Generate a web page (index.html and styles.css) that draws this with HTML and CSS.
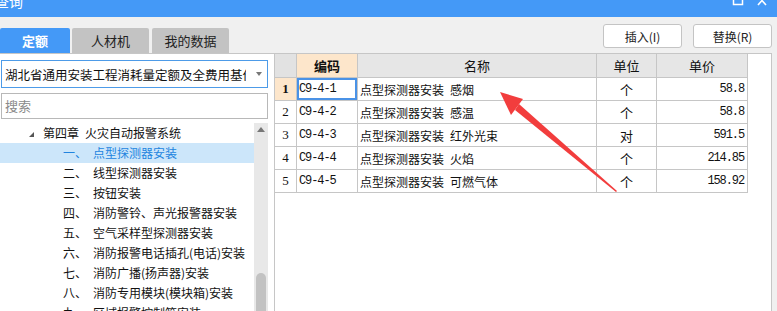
FILE: index.html
```html
<!DOCTYPE html>
<html lang="zh">
<head>
    <meta charset="UTF-8">
    <title>查询</title>
    <link rel="stylesheet" href="styles.css">
</head>
<body>
    <div class="titlebar">
        <span class="title">查询</span>
        <svg class="win-btns" width="40" height="17" viewBox="0 0 40 17">
            <rect x="1.5" y="-6" width="9" height="10.5" fill="none" stroke="#fff" stroke-width="1.5"/>
            <path d="M26 -4 L34 5 M34 -4 L26 5" stroke="#fff" stroke-width="1.6"/>
        </svg>
    </div>

    <div class="main">
        <div class="left">
            <div class="tabs">
                <div class="tab active">定额</div>
                <div class="tab">人材机</div>
                <div class="tab">我的数据</div>
            </div>
            <div class="left-body">
                <div class="select">
                    <span class="select-text">湖北省通用安装工程消耗量定额及全费用基价表</span>
                    <span class="caret"></span>
                </div>
                <div class="search">搜索</div>
                <div class="tree-wrap">
                    <ul class="tree">
                        <li class="chapter"><span class="tri"></span>第四章&ensp;火灾自动报警系统</li>
                        <li class="item selected"><span class="num">一、</span>点型探测器安装</li>
                        <li class="item"><span class="num">二、</span>线型探测器安装</li>
                        <li class="item"><span class="num">三、</span>按钮安装</li>
                        <li class="item"><span class="num">四、</span>消防警铃、声光报警器安装</li>
                        <li class="item"><span class="num">五、</span>空气采样型探测器安装</li>
                        <li class="item"><span class="num">六、</span>消防报警电话插孔(电话)安装</li>
                        <li class="item"><span class="num">七、</span>消防广播(扬声器)安装</li>
                        <li class="item"><span class="num">八、</span>消防专用模块(模块箱)安装</li>
                        <li class="item"><span class="num">九、</span>区域报警控制箱安装</li>
                    </ul>
                    <div class="scrollbar">
                        <span class="up"></span>
                        <span class="thumb"></span>
                    </div>
                </div>
            </div>
        </div>

        <div class="right">
            <div class="toolbar">
                <button>插入(I)</button>
                <button>替换(R)</button>
            </div>
            <div class="panel">
                <div class="grid">
                    <div class="th rn"></div>
                    <div class="th code-h">编码</div>
                    <div class="th">名称</div>
                    <div class="th">单位</div>
                    <div class="th">单价</div>

                    <div class="td rn current">1</div>
                    <div class="td code active">C9-4-1</div>
                    <div class="td name">点型探测器安装&ensp;感烟</div>
                    <div class="td unit">个</div>
                    <div class="td price">58.8</div>

                    <div class="td rn">2</div>
                    <div class="td code">C9-4-2</div>
                    <div class="td name">点型探测器安装&ensp;感温</div>
                    <div class="td unit">个</div>
                    <div class="td price">58.8</div>

                    <div class="td rn">3</div>
                    <div class="td code">C9-4-3</div>
                    <div class="td name">点型探测器安装&ensp;红外光束</div>
                    <div class="td unit">对</div>
                    <div class="td price">591.5</div>

                    <div class="td rn">4</div>
                    <div class="td code">C9-4-4</div>
                    <div class="td name">点型探测器安装&ensp;火焰</div>
                    <div class="td unit">个</div>
                    <div class="td price">214.85</div>

                    <div class="td rn">5</div>
                    <div class="td code">C9-4-5</div>
                    <div class="td name">点型探测器安装&ensp;可燃气体</div>
                    <div class="td unit">个</div>
                    <div class="td price">158.92</div>
                </div>
            </div>
        </div>
    </div>

    <!-- red annotation arrow -->
    <svg class="arrow" width="777" height="311" viewBox="0 0 777 311">
        <polygon points="500,92 523,99 511,115" fill="#f23d3d"/>
        <polygon points="515,110 519,104 617,191 616,192" fill="#f23d3d"/>
    </svg>
</body>
</html>
```

FILE: styles.css
```css
:root {
    --blue: #4499f7;
    --line: #c6c6c6;
    --bg: #f0f0f0;
    --peach: #fde6cb;
}

html, body {
    margin: 0;
    height: 311px;
    overflow: hidden;
}

body {
    background: var(--bg);
    font-family: "Noto Sans CJK SC", sans-serif;
    font-size: 12px;
    color: #111;
    position: relative;
}

.titlebar {
    height: 17px;
    background: var(--blue);
    display: flex;
    justify-content: space-between;
    overflow: hidden;
    color: #fff;
}

.title {
    font-size: 14px;
    line-height: 17px;
    margin-top: -7px;
    margin-left: -5px;
}

.win-btns {
    margin-right: 5px;
}

.main {
    display: flex;
    height: 294px;
}

/* left side */
.left {
    width: 274px;
    display: flex;
    flex-direction: column;
}

.tabs {
    height: 37px;
    box-sizing: border-box;
    padding-top: 11px;
    border-bottom: 1px solid var(--line);
    display: flex;
    gap: 2px;
}

.tab {
    width: 77px;
    background: #c3c3c3;
    border-radius: 2px 2px 0 0;
    text-align: center;
    line-height: 25px;
    font-size: 13px;
    color: #222;
}

.tab.active {
    width: 70px;
    background: var(--blue);
    color: #fff;
    font-weight: bold;
}

.tab + .tab + .tab {
    margin-left: 1px;
}

.left-body {
    flex: 1;
    background: #fff;
    padding-top: 6px;
    overflow: hidden;
}

.select {
    margin-left: 1px;
    width: 267px;
    height: 28px;
    box-sizing: border-box;
    border: 1px solid #4d9be8;
    display: flex;
    align-items: center;
    padding-left: 3px;
    font-size: 12.5px;
}

.select-text {
    flex: 1;
    white-space: nowrap;
    overflow: hidden;
}

.caret {
    width: 0;
    height: 0;
    border-left: 3px solid transparent;
    border-right: 3px solid transparent;
    border-top: 4px solid #777;
    margin: 0 5px 0 10px;
}

.search {
    margin: 5px 0 0 1px;
    width: 267px;
    height: 26px;
    box-sizing: border-box;
    border: 1px solid #b8b8b8;
    padding-left: 3px;
    line-height: 24px;
    font-size: 13px;
    color: #8a8a8a;
}

.tree-wrap {
    margin-top: 4px;
    display: flex;
    height: 200px;
}

.tree {
    list-style: none;
    margin: 0;
    padding: 0;
    width: 254px;
}

.tree li {
    height: 20px;
    line-height: 20px;
    white-space: nowrap;
}

.chapter {
    padding-left: 29px;
}

.tri {
    display: inline-block;
    width: 0;
    height: 0;
    border-left: 5px solid transparent;
    border-bottom: 5px solid #555;
    margin-right: 9px;
    vertical-align: middle;
}

.item {
    padding-left: 63px;
}

.num {
    display: inline-block;
    width: 30px;
}

.item.selected {
    background: #cce6fa;
    color: #2184df;
}

.scrollbar {
    width: 14px;
    background: #e8e8e8;
    display: flex;
    flex-direction: column;
    align-items: center;
}

.up {
    margin-top: 4px;
    width: 0;
    height: 0;
    border-left: 4px solid transparent;
    border-right: 4px solid transparent;
    border-bottom: 5px solid #777;
}

.thumb {
    margin-top: 141px;
    width: 10px;
    height: 60px;
    background: #c2c2c2;
    border-radius: 5px 5px 0 0;
}

/* right side */
.right {
    flex: 1;
    display: flex;
    flex-direction: column;
}

.toolbar {
    height: 36px;
    box-sizing: border-box;
    padding: 7px 5px 0 0;
    display: flex;
    justify-content: flex-end;
    gap: 11px;
}

button {
    width: 79px;
    height: 24px;
    background: #fff;
    border: 1px solid #c4c4c4;
    border-radius: 3px;
    font-family: "Noto Sans CJK SC", sans-serif;
    font-size: 12px;
    color: #222;
    padding: 0;
}

.panel {
    flex: 1;
    margin-right: 5px;
    background: #fff;
    border: 1px solid var(--line);
    border-bottom: none;
}

.grid {
    display: grid;
    grid-template-columns: 22px 61px 239px 60px 91px;
    grid-template-rows: 24px repeat(5, 23px);
    width: 473px;
}

.th, .td {
    box-sizing: border-box;
    border-right: 1px solid var(--line);
    border-bottom: 1px solid var(--line);
    display: flex;
    align-items: center;
    white-space: nowrap;
    overflow: hidden;
}

.th {
    background: #e6e6e6;
    justify-content: center;
    font-size: 13px;
}

.th.rn {
    background: #e2e2e2;
}

.th.code-h {
    background: var(--peach);
    font-weight: bold;
}

.td.rn {
    justify-content: center;
    font-family: "Liberation Serif", serif;
    font-size: 13px;
}

.td.rn.current {
    background: var(--peach);
    font-weight: bold;
}

.code, .price {
    font-family: "Liberation Mono", monospace;
    font-size: 12px;
    letter-spacing: -1.1px;
}

.code {
    padding-left: 2px;
}

.code.active {
    box-shadow: inset 0 0 0 2px #4a92e6;
}

.name {
    padding-left: 2px;
    font-size: 12px;
}

.unit {
    justify-content: center;
    font-size: 13px;
}

.price {
    justify-content: flex-end;
    padding-right: 3px;
}

.arrow {
    position: absolute;
    left: 0;
    top: 0;
    pointer-events: none;
}
```
